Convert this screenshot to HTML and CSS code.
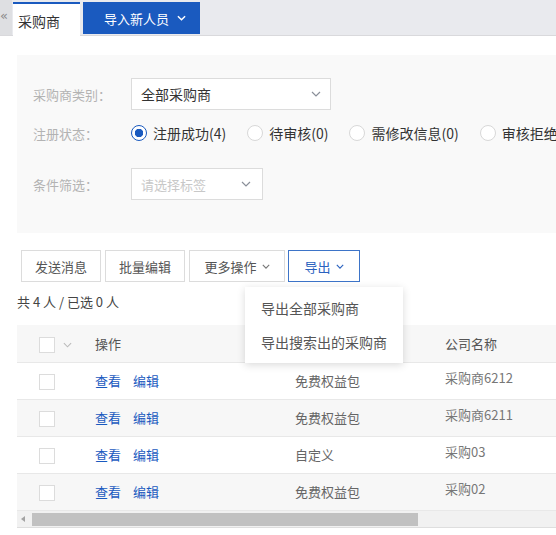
FILE: index.html
```html
<!DOCTYPE html>
<html lang="zh-CN">
  <head>
    <meta charset="UTF-8">
    <title>采购商</title>
    <link rel="stylesheet" href="styles.css">
  </head>
  <body>
    <header class="topbar">
      <span class="collapse">«</span>
      <div class="tab">采购商</div>
      <button class="tab-btn">
        <span>导入新人员</span>
        <svg viewBox="0 0 10 6" width="9" height="6" aria-hidden="true"><path d="M1 1l4 4 4-4" fill="none" stroke="currentColor" stroke-width="1.6"/></svg>
      </button>
    </header>

    <main class="page">
      <section class="filters">
        <div class="filter-row">
          <label>采购商类别：</label>
          <div class="select select-wide">
            <span>全部采购商</span>
            <svg viewBox="0 0 10 6" width="10" height="6" aria-hidden="true"><path d="M1 1l4 4 4-4" fill="none" stroke="currentColor" stroke-width="1.2"/></svg>
          </div>
        </div>
        <div class="filter-row">
          <label>注册状态：</label>
          <div class="radios">
            <span class="radio checked"><i></i>注册成功(4)</span>
            <span class="radio"><i></i>待审核(0)</span>
            <span class="radio"><i></i>需修改信息(0)</span>
            <span class="radio"><i></i>审核拒绝(0)</span>
          </div>
        </div>
        <div class="filter-row filter-gap">
          <label>条件筛选：</label>
          <div class="select select-narrow placeholder">
            <span>请选择标签</span>
            <svg viewBox="0 0 10 6" width="10" height="6" aria-hidden="true"><path d="M1 1l4 4 4-4" fill="none" stroke="currentColor" stroke-width="1.2"/></svg>
          </div>
        </div>
      </section>

      <div class="toolbar">
        <button class="btn btn-80">发送消息</button>
        <button class="btn btn-80">批量编辑</button>
        <button class="btn btn-more">更多操作
          <svg viewBox="0 0 10 6" width="8" height="5" aria-hidden="true"><path d="M1 1l4 4 4-4" fill="none" stroke="currentColor" stroke-width="1.4"/></svg>
        </button>
        <div class="export">
          <button class="btn btn-export">导出
            <svg viewBox="0 0 10 6" width="8" height="5" aria-hidden="true"><path d="M1 1l4 4 4-4" fill="none" stroke="currentColor" stroke-width="1.4"/></svg>
          </button>
          <ul class="dropdown">
            <li>导出全部采购商</li>
            <li>导出搜索出的采购商</li>
          </ul>
        </div>
      </div>

      <p class="count">共 4 人 / 已选 0 人</p>

      <div class="table-wrap">
        <table class="grid">
          <colgroup>
            <col class="c-check">
            <col class="c-ops">
            <col class="c-plan">
            <col class="c-name">
          </colgroup>
          <thead>
            <tr>
              <th class="check-cell"><span class="box"></span><svg class="head-caret" viewBox="0 0 10 6" width="9" height="6" aria-hidden="true"><path d="M1 1l4 4 4-4" fill="none" stroke="currentColor" stroke-width="1.2"/></svg></th>
              <th>操作</th>
              <th></th>
              <th>公司名称</th>
            </tr>
          </thead>
          <tbody>
            <tr>
              <td class="check-cell"><span class="box"></span></td>
              <td><a>查看</a><a>编辑</a></td>
              <td>免费权益包</td>
              <td class="name">采购商6212</td>
            </tr>
            <tr>
              <td class="check-cell"><span class="box"></span></td>
              <td><a>查看</a><a>编辑</a></td>
              <td>免费权益包</td>
              <td class="name">采购商6211</td>
            </tr>
            <tr>
              <td class="check-cell"><span class="box"></span></td>
              <td><a>查看</a><a>编辑</a></td>
              <td>自定义</td>
              <td class="name">采购03</td>
            </tr>
            <tr>
              <td class="check-cell"><span class="box"></span></td>
              <td><a>查看</a><a>编辑</a></td>
              <td>免费权益包</td>
              <td class="name">采购02</td>
            </tr>
          </tbody>
        </table>
        <div class="hscroll">
          <span class="arrow"></span>
          <span class="thumb"></span>
        </div>
      </div>
    </main>
  </body>
</html>
```

FILE: styles.css
```css
*,
*::before,
*::after {
  box-sizing: border-box;
}

body {
  margin: 0;
  width: 556px;
  overflow: hidden;
  font-family: "Noto Sans CJK SC", "Noto Sans", sans-serif;
  font-size: 13px;
  color: #333;
  background: #fff;
}

button {
  font: inherit;
  cursor: pointer;
}

/* top tab bar */
.topbar {
  display: flex;
  align-items: flex-end;
  height: 36px;
  background: #e9eaee;
  border-bottom: 1px solid #d9d9dc;
}

.collapse {
  align-self: stretch;
  width: 12px;
  padding-top: 8px;
  background: #dedfe2;
  color: #8a8a8a;
  font-family: "DejaVu Sans", sans-serif;
  font-size: 13px;
  line-height: 16px;
}

.tab {
  width: 67px;
  height: 34px;
  margin-left: 1px;
  margin-bottom: -1px;
  padding: 6px 5px 0;
  background: #fff;
  border-top: 2px solid #1a5abf;
  font-size: 14px;
  line-height: 22px;
  color: #333;
}

.tab-btn {
  display: flex;
  align-items: center;
  gap: 8px;
  width: 117px;
  height: 32px;
  margin: 0 0 1px 3px;
  padding: 0 0 0 21px;
  border: 0;
  background: #1a5abf;
  color: #fff;
  font-size: 13px;
}

/* page */
.page {
  position: relative;
  width: 600px;
  margin: 19px 0 0 17px;
}

.filters {
  padding: 23px 0 33px 16px;
  background: #f9f9f9;
}

.filter-row {
  display: flex;
  align-items: center;
  height: 32px;
}

.filter-row + .filter-row {
  margin-top: 7px;
}

.filter-row.filter-gap {
  margin-top: 19px;
}

.filter-row label {
  width: 98px;
  color: #b3b3b3;
  font-size: 13px;
}

.select {
  display: flex;
  align-items: center;
  justify-content: space-between;
  height: 32px;
  padding: 0 9px 0 9px;
  background: #fff;
  border: 1px solid #dcdcdc;
  font-size: 14px;
  color: #333;
}

.select svg {
  color: #8a8f99;
}

.select-wide {
  width: 200px;
}

.select-narrow {
  width: 132px;
  padding-right: 11px;
}

.select.placeholder {
  color: #c8c8c8;
  font-size: 13px;
}

.radios {
  display: flex;
  align-items: center;
  white-space: nowrap;
}

.radio {
  display: flex;
  align-items: center;
  gap: 6px;
  margin-right: 21px;
  font-size: 14px;
  color: #333;
}

.radio i {
  width: 16px;
  height: 16px;
  border-radius: 50%;
  border: 1px solid #d8d8d8;
  background: #fff;
}

.radio.checked i {
  border-color: #1a5abf;
  background: radial-gradient(circle, #1a5abf 0 4px, #fff 4.5px);
}

/* toolbar */
.toolbar {
  display: flex;
  align-items: center;
  gap: 4px;
  margin: 17px 0 0 4px;
}

.btn {
  display: inline-flex;
  align-items: center;
  justify-content: center;
  gap: 5px;
  height: 32px;
  padding: 0;
  border: 1px solid #dcdcdc;
  background: #fff;
  color: #555;
  font-size: 13px;
}

.btn svg {
  color: #777;
}

.btn-80 {
  width: 80px;
}

.btn-more {
  width: 96px;
}

.export {
  position: relative;
  margin-left: -1px;
}

.btn-export {
  width: 72px;
  border-color: #3d74c8;
  color: #2a62bf;
}

.btn-export svg {
  color: #2a62bf;
}

.dropdown {
  position: absolute;
  top: calc(100% + 5px);
  left: -43px;
  z-index: 2;
  width: 158px;
  margin: 0;
  padding: 4px 0;
  list-style: none;
  background: #fff;
  box-shadow: 0 2px 8px rgba(0, 0, 0, 0.15);
}

.dropdown li {
  height: 34px;
  padding-left: 16px;
  line-height: 34px;
  font-size: 14px;
  color: #555;
  white-space: nowrap;
}

.count {
  margin: 10px 0 13px;
  line-height: 20px;
  font-size: 13px;
  color: #444;
}

/* table */
.grid {
  width: 600px;
  table-layout: fixed;
  border-collapse: collapse;
}

.c-check { width: 78px; }
.c-ops { width: 200px; }
.c-plan { width: 150px; }
.c-name { width: 172px; }

.grid th,
.grid td {
  height: 37px;
  padding: 0;
  text-align: left;
  vertical-align: middle;
  border-bottom: 1px solid #e8e8e8;
  font-size: 13px;
  white-space: nowrap;
}

.grid th {
  background: #f7f7f7;
  font-weight: normal;
  color: #555;
}

.grid td {
  color: #666;
}

.grid tbody tr:nth-child(even) td {
  background: #f7f7f7;
}

.check-cell {
  padding-left: 22px !important;
}

.box {
  display: inline-block;
  width: 16px;
  height: 16px;
  vertical-align: middle;
  border: 1px solid #dcdcdc;
  background: #fff;
}

.head-caret {
  margin-left: 8px;
  vertical-align: middle;
  color: #bbb;
}

.grid a {
  margin-right: 12px;
  color: #1a5abf;
}

.grid td.name {
  vertical-align: top;
  padding-top: 6px;
  line-height: 18px;
  color: #777;
}

.hscroll {
  position: relative;
  height: 17px;
  background: #f1f1f1;
  border-bottom: 1px solid #dedede;
}

.hscroll .arrow {
  position: absolute;
  left: 4px;
  top: 5px;
  border-style: solid;
  border-width: 3.5px 4px 3.5px 0;
  border-color: transparent #a3a3a3 transparent transparent;
}

.hscroll .thumb {
  position: absolute;
  left: 15px;
  top: 2px;
  width: 386px;
  height: 13px;
  background: #c1c1c1;
}
```
